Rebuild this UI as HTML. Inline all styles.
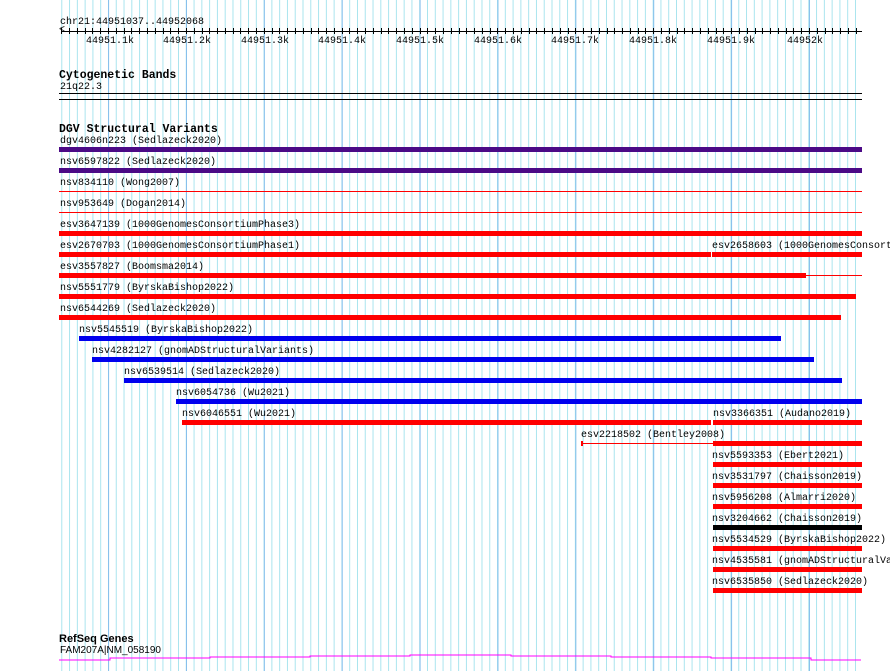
<!DOCTYPE html>
<html><head><style>
body{margin:0;width:890px;height:671px;background:#fff;position:relative;overflow:hidden;font-family:"Liberation Mono",monospace;font-size:10px;color:#000}
.g{position:absolute;top:0;height:671px;left:59px;width:803px}
.minor{background-image:linear-gradient(to right,#a8e4ee 0 1px,transparent 1px);background-size:7.789px 100%;background-position:2.3px 0}
.major{background-image:linear-gradient(to right,#86bfec 0 1px,transparent 1px);background-size:77.89px 100%;background-position:49.1px 0}
.t{position:absolute;white-space:pre;line-height:10px;margin-top:2px}
.b{position:absolute;height:5px}
.l{position:absolute;height:1px;background:#f00}
.h{position:absolute;font-weight:bold;font-size:11.5px;white-space:pre;line-height:12px;margin-top:2px}
.R{background:#f00}.P{background:#4b0a86}.B{background:#0000ee}.K{background:#000}
.tk{position:absolute;top:28px;width:1px;height:6px;background:#000}
</style></head><body>
<div class="g minor"></div><div class="g major"></div>

<div class="t" style="left:60px;top:16px">chr21:44951037..44952068</div>
<div style="position:absolute;left:61px;top:31px;width:801px;height:1px;background:#000"></div>
<div class="t" style="left:59px;top:24px;font-size:10px">&lt;</div>
<div id="ticks"></div>
<div class="t" style="left:86px;top:35px">44951.1k</div>
<div class="t" style="left:163px;top:35px">44951.2k</div>
<div class="t" style="left:241px;top:35px">44951.3k</div>
<div class="t" style="left:318px;top:35px">44951.4k</div>
<div class="t" style="left:396px;top:35px">44951.5k</div>
<div class="t" style="left:474px;top:35px">44951.6k</div>
<div class="t" style="left:551px;top:35px">44951.7k</div>
<div class="t" style="left:629px;top:35px">44951.8k</div>
<div class="t" style="left:707px;top:35px">44951.9k</div>
<div class="t" style="left:787px;top:35px">44952k</div>

<div class="h" style="left:59px;top:68px">Cytogenetic Bands</div>
<div class="t" style="left:60px;top:81px">21q22.3</div>
<div style="position:absolute;left:59px;top:93px;width:803px;height:1px;background:#000"></div>
<div style="position:absolute;left:59px;top:99px;width:803px;height:1px;background:#000"></div>

<div class="h" style="left:59px;top:122px">DGV Structural Variants</div>
<div class="t" style="left:60px;top:135px">dgv4606n223 (Sedlazeck2020)</div><div class="b P" style="left:59px;top:147px;width:803px"></div>
<div class="t" style="left:60px;top:156px">nsv6597822 (Sedlazeck2020)</div><div class="b P" style="left:59px;top:168px;width:803px"></div>
<div class="t" style="left:60px;top:177px">nsv834110 (Wong2007)</div><div class="l" style="left:59px;top:191px;width:803px"></div>
<div class="t" style="left:60px;top:198px">nsv953649 (Dogan2014)</div><div class="l" style="left:59px;top:212px;width:803px"></div>
<div class="t" style="left:60px;top:219px">esv3647139 (1000GenomesConsortiumPhase3)</div><div class="b R" style="left:59px;top:231px;width:803px"></div>
<div class="t" style="left:60px;top:240px">esv2670703 (1000GenomesConsortiumPhase1)</div><div class="b R" style="left:59px;top:252px;width:652px"></div>
<div class="t" style="left:712px;top:240px">esv2658603 (1000GenomesConsort</div><div class="b R" style="left:712px;top:252px;width:150px"></div>
<div class="t" style="left:60px;top:261px">esv3557827 (Boomsma2014)</div><div class="b R" style="left:59px;top:273px;width:747px"></div><div class="l" style="left:806px;top:275px;width:56px"></div>
<div class="t" style="left:60px;top:282px">nsv5551779 (ByrskaBishop2022)</div><div class="b R" style="left:59px;top:294px;width:797px"></div>
<div class="t" style="left:60px;top:303px">nsv6544269 (Sedlazeck2020)</div><div class="b R" style="left:59px;top:315px;width:782px"></div>
<div class="t" style="left:79px;top:324px">nsv5545519 (ByrskaBishop2022)</div><div class="b B" style="left:79px;top:336px;width:702px"></div>
<div class="t" style="left:92px;top:345px">nsv4282127 (gnomADStructuralVariants)</div><div class="b B" style="left:92px;top:357px;width:722px"></div>
<div class="t" style="left:124px;top:366px">nsv6539514 (Sedlazeck2020)</div><div class="b B" style="left:124px;top:378px;width:718px"></div>
<div class="t" style="left:176px;top:387px">nsv6054736 (Wu2021)</div><div class="b B" style="left:176px;top:399px;width:686px"></div>
<div class="t" style="left:182px;top:408px">nsv6046551 (Wu2021)</div><div class="b R" style="left:182px;top:420px;width:529px"></div>
<div class="t" style="left:713px;top:408px">nsv3366351 (Audano2019)</div><div class="b R" style="left:713px;top:420px;width:149px"></div>
<div class="t" style="left:581px;top:429px">esv2218502 (Bentley2008)</div><div class="l" style="left:581px;top:443px;width:132px"></div><div style="position:absolute;left:581px;top:441px;width:2px;height:5px;background:#f00"></div><div class="b R" style="left:713px;top:441px;width:149px"></div>
<div class="t" style="left:712px;top:450px">nsv5593353 (Ebert2021)</div><div class="b R" style="left:713px;top:462px;width:149px"></div>
<div class="t" style="left:712px;top:471px">nsv3531797 (Chaisson2019)</div><div class="b R" style="left:713px;top:483px;width:149px"></div>
<div class="t" style="left:712px;top:492px">nsv5956208 (Almarri2020)</div><div class="b R" style="left:713px;top:504px;width:149px"></div>
<div class="t" style="left:712px;top:513px">nsv3204662 (Chaisson2019)</div><div class="b K" style="left:713px;top:525px;width:149px"></div>
<div class="t" style="left:712px;top:534px">nsv5534529 (ByrskaBishop2022)</div><div class="b R" style="left:713px;top:546px;width:149px"></div>
<div class="t" style="left:712px;top:555px">nsv4535581 (gnomADStructuralVa</div><div class="b R" style="left:713px;top:567px;width:149px"></div>
<div class="t" style="left:712px;top:576px">nsv6535850 (Sedlazeck2020)</div><div class="b R" style="left:713px;top:588px;width:149px"></div>

<div class="h" style="left:59px;top:631px;font-family:'Liberation Sans',sans-serif;font-size:11px">RefSeq Genes</div>
<div class="t" style="left:60px;top:644px;font-family:'Liberation Sans',sans-serif;font-size:10px">FAM207A|NM_058190</div>
<svg style="position:absolute;left:0;top:650px" width="890" height="21"><polyline fill="none" stroke="#f0f" stroke-width="1" points="59,10 110,10 110,8 210,8 210,7 310,7 310,6 410,6 410,5 511,5 511,6 611,6 611,7 711,7 711,8 811,8 811,10 861,10"/></svg>
<script>
var h='';for(var i=0;i<104;i++){var x=61.3+i*7.789;if(x<862)h+='<div class="tk" style="left:'+Math.round(x)+'px"></div>';}
document.getElementById('ticks').innerHTML=h;
</script>
</body></html>
